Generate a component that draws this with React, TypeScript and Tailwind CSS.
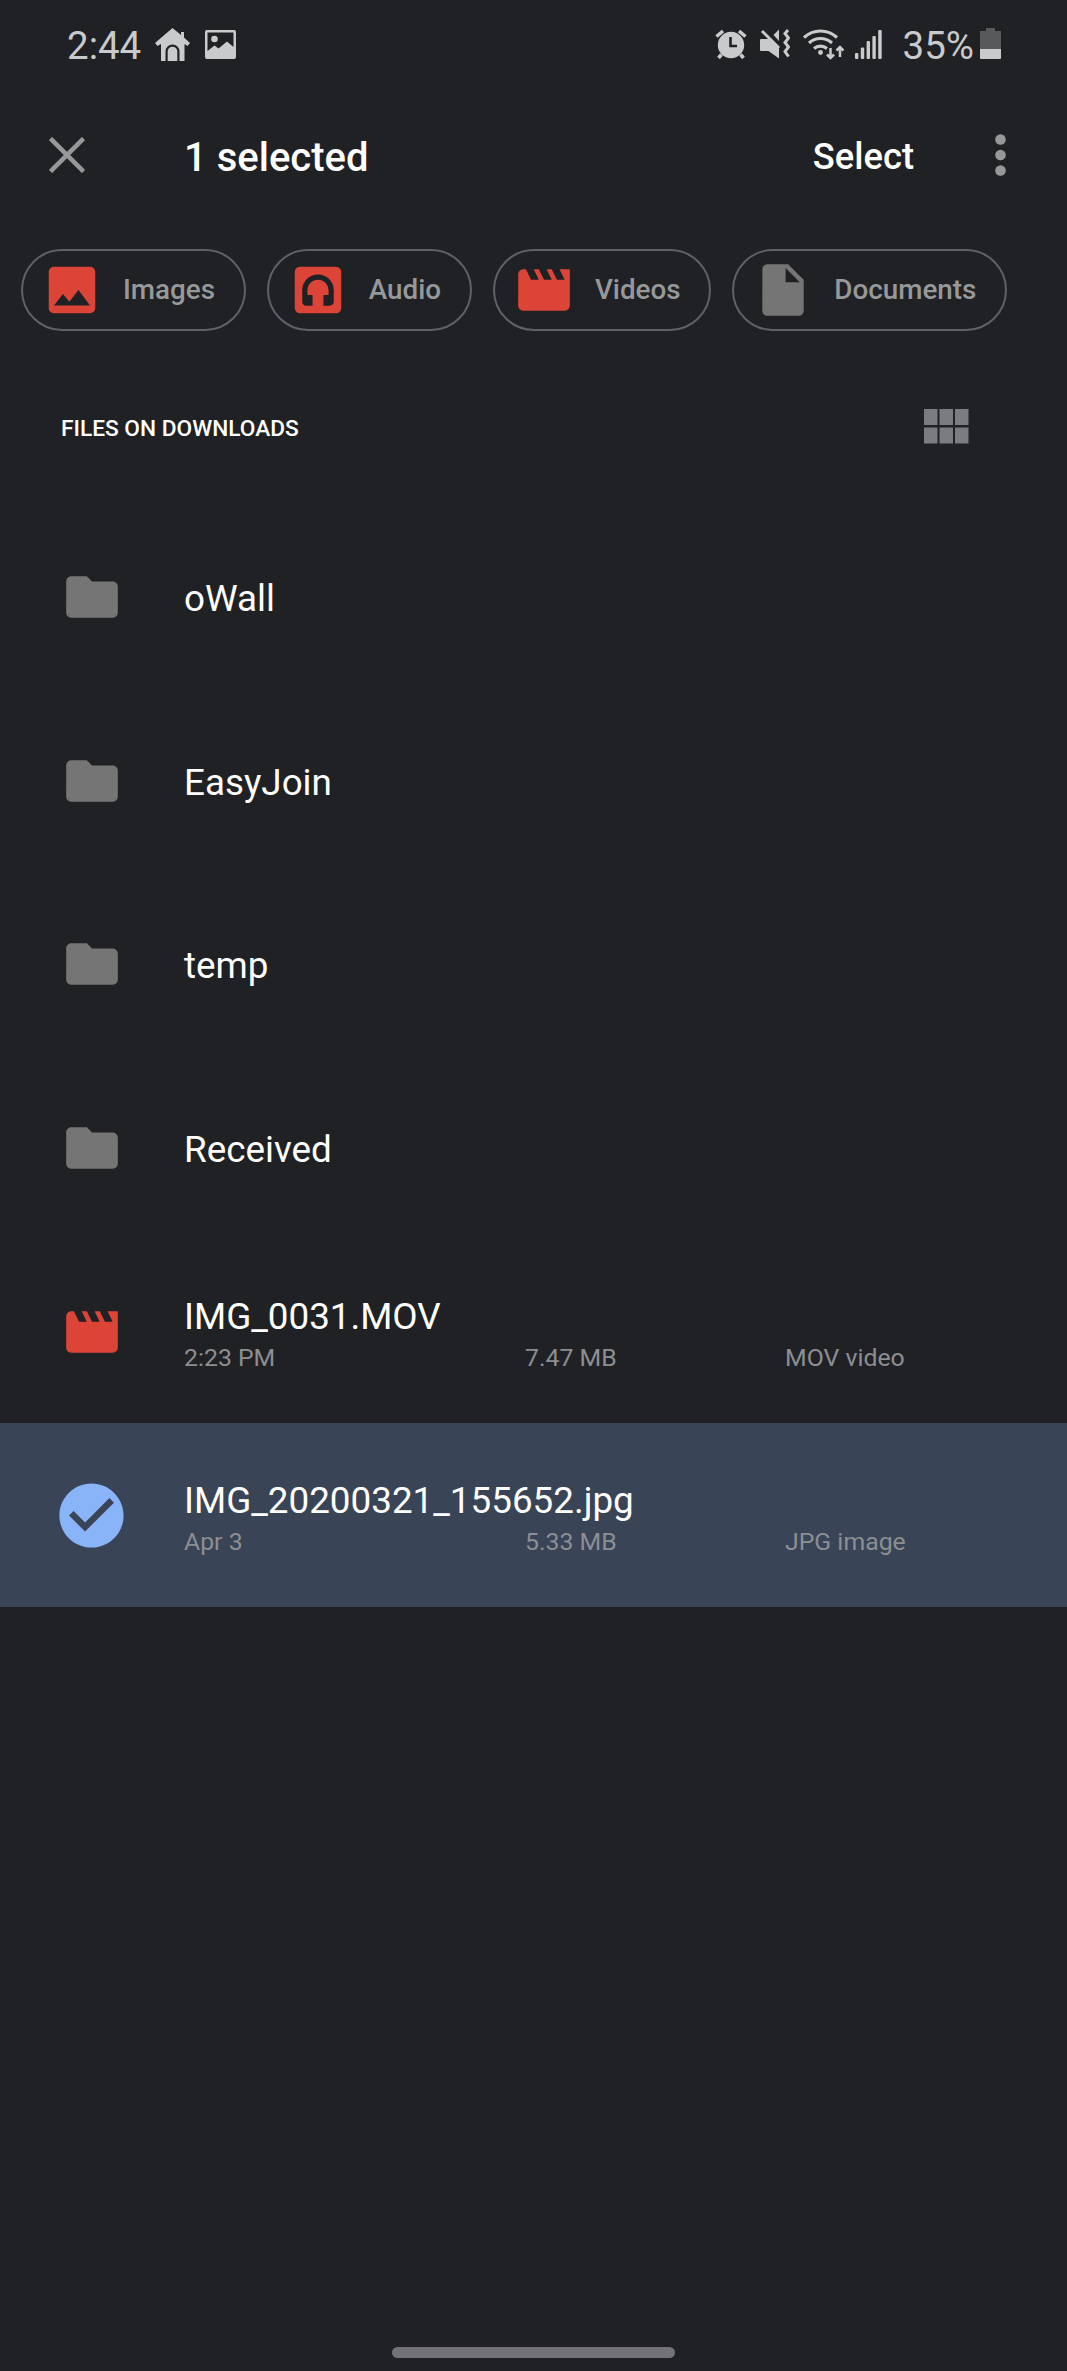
import type { ReactNode } from "react";
import {
  MdCheckCircle,
  MdFolder,
  MdInsertDriveFile,
  MdMovie,
  MdPhoto,
} from "react-icons/md";

interface FileEntry {
  name: string;
  kind: "folder" | "video" | "image";
  date?: string;
  size?: string;
  type?: string;
  selected?: boolean;
}

const files: FileEntry[] = [
  { name: "oWall", kind: "folder" },
  { name: "EasyJoin", kind: "folder" },
  { name: "temp", kind: "folder" },
  { name: "Received", kind: "folder" },
  {
    name: "IMG_0031.MOV",
    kind: "video",
    date: "2:23 PM",
    size: "7.47 MB",
    type: "MOV video",
  },
  {
    name: "IMG_20200321_155652.jpg",
    kind: "image",
    date: "Apr 3",
    size: "5.33 MB",
    type: "JPG image",
    selected: true,
  },
];

// Rounded square with a headphones cutout
function AudioIcon() {
  return (
    <svg viewBox="0 0 24 24" className="size-[62px] text-[#db4437]">
      <rect x="3" y="3" width="18" height="18" rx="2" fill="currentColor" />
      <path
        d="M12 6a6.1 6.1 0 0 0-6.1 6.1v4.4c0 .9.7 1.6 1.6 1.6h2.4V13.9H7.9v-1.8a4.1 4.1 0 0 1 8.2 0v1.8h-2v4.2h2.4c.9 0 1.6-.7 1.6-1.6v-4.4A6.1 6.1 0 0 0 12 6z"
        fill="#202124"
      />
    </svg>
  );
}

function GridIcon() {
  return (
    <svg viewBox="0 0 45 35" className="mb-[2px] h-[35px] w-[45px]" fill="#7b7c7f">
      <path d="M0 0h13.5v16H0zM15.5 0H29v16H15.5zM31 0h13.5v16H31zM0 18.500h13.5v16H0zM15.5 18.500H29v16H15.5zM31 18.500h13.5v16H31z" />
    </svg>
  );
}

function StatusBar() {
  return (
    <div className="flex h-[90px] items-center pr-[66px] pl-[67px] text-[#c8cacb]">
      <span className="pt-[2px] text-[38.5px] leading-none">2:44</span>
      <svg viewBox="0 0 35 33" className="mb-[2px] ml-[14px] h-[33px] w-[35px]" fill="currentColor">
        <path d="M17.5 0 26 7V4h3v5.5l6 5.5-2.5 3-3-2V33h-5V23.5a7 7 0 0 0-14 0V33H6V16l-3.5 2L0 15z" />
        <path d="M12.7 33V23.5a4.8 4.8 0 0 1 9.6 0V33z" />
      </svg>
      <svg viewBox="0 0 31 29" className="mb-px ml-[15px] h-[29px] w-[31px]">
        <path
          fillRule="evenodd"
          fill="currentColor"
          d="M2 0h27a2 2 0 0 1 2 2v25a2 2 0 0 1-2 2H2a2 2 0 0 1-2-2V2a2 2 0 0 1 2-2zM2.5 2.5V21L9.5 15.5l4 3 8.5-7 6.5 5.5V2.5z"
        />
        <circle cx="9.5" cy="9" r="3.3" fill="currentColor" />
      </svg>

      <div className="ml-auto flex items-center">
        {/* alarm */}
        <svg viewBox="0 0 32 30" className="mb-[3px] h-[30px] w-[32px]" fill="none" stroke="currentColor">
          <circle cx="16" cy="16" r="13.2" fill="currentColor" stroke="none" />
          <path d="M1.5 7.5 8 2M24 2l6.5 5.5M6.5 25.5l-3 3.5M25.5 25.5l3 3.5" strokeWidth="3.6" />
          <path d="M15.5 8v9H22" stroke="#202124" strokeWidth="2.6" />
        </svg>
        {/* muted with vibration */}
        <svg viewBox="0 0 30 30" className="mb-[3px] ml-[13px] h-[30px] w-[30px]" fill="currentColor">
          <path d="M1 10h9l9 8v11.5L8.5 22H1a1 1 0 0 1-1-1V11a1 1 0 0 1 1-1z" />
          <path d="M13.5 6 19 .5V12z" />
          <path
            d="M2 2l17 17M28 1l-3 3.5 3.5 4.5-3.5 4.5 3.5 4.5-3.5 4.5 3.5 5"
            fill="none"
            stroke="currentColor"
            strokeWidth="3"
          />
        </svg>
        {/* wifi with traffic arrows */}
        <svg
          viewBox="0 0 41 31"
          className="mb-[2px] ml-[13px] h-[31px] w-[41px]"
          fill="none"
          stroke="currentColor"
          strokeWidth="3.1"
        >
          <path d="M1 8.5a24 24 0 0 1 33 0M6 14a17 17 0 0 1 23 0M11 19.5a10 10 0 0 1 13 0" />
          <circle cx="17.5" cy="23.5" r="2.4" fill="currentColor" stroke="none" />
          <path
            d="M27.5 19v10M24 25.5l3.5 3.5 3.5-3.5M37 28V18M33.5 21.5 37 18l3.5 3.5"
            strokeWidth="2.5"
          />
        </svg>
        {/* signal */}
        <svg viewBox="0 0 27 29" className="mb-px ml-[11px] h-[29px] w-[27px]" fill="currentColor">
          <rect x="0" y="23" width="3.4" height="6" rx="1" />
          <rect x="5.8" y="17.5" width="3.4" height="11.5" rx="1" />
          <rect x="11.6" y="11" width="3.4" height="18" rx="1" />
          <rect x="17.4" y="6" width="3.4" height="23" rx="1" />
          <rect x="23.2" y="0" width="3.5" height="29" rx="1" />
        </svg>
        <span className="ml-[21px] pt-[2px] text-[38.5px] leading-none">35%</span>
        <svg viewBox="0 0 21 31" className="mb-[3px] ml-[6px] h-[31px] w-[21px]">
          <path d="M6 0h9v3h6v18H0V3h6z" fill="#58595b" />
          <path d="M0 21h21v9a1 1 0 0 1-1 1H1a1 1 0 0 1-1-1z" fill="currentColor" />
        </svg>
      </div>
    </div>
  );
}

function SelectionBar() {
  return (
    <header className="flex h-[130px] items-center pr-[61px] pl-[49px] font-medium text-white">
      <svg viewBox="0 0 36 36" className="size-[36px]" stroke="#97989a" strokeWidth="4.5">
        <path d="M1.5 1.5l33 33M34.5 1.5l-33 33" />
      </svg>
      <h1 className="ml-[99px] pt-[5px] text-[40px]">1 selected</h1>
      <button className="ml-auto pt-[5px] text-[36.3px] font-medium">Select</button>
      <svg viewBox="0 0 11 42" className="ml-[81px] h-[42px] w-[11px]" fill="#97989a">
        <circle cx="5.5" cy="5.5" r="5.3" />
        <circle cx="5.5" cy="21" r="5.3" />
        <circle cx="5.5" cy="36.5" r="5.3" />
      </svg>
    </header>
  );
}

function Chip({ icon, label }: { icon: ReactNode; label: string }) {
  return (
    <button className="flex h-[82px] shrink-0 items-center gap-[20px] rounded-full border-2 border-[#5f6165] pr-[28.5px] pl-[18px] text-[27.8px] font-medium text-[#97989a]">
      {icon}
      {label}
    </button>
  );
}

function FileIcon({ file }: { file: FileEntry }) {
  if (file.selected) {
    return <MdCheckCircle className="size-[77px] text-[#8ab4f8]" />;
  }
  if (file.kind === "folder") {
    return <MdFolder className="size-[62px] text-[#757575]" />;
  }
  return <MdMovie className="size-[62px] text-[#db4437]" />;
}

function FileRow({ file }: { file: FileEntry }) {
  return (
    <li
      className={`flex h-[183.7px] items-center ${file.selected ? "bg-[#3a4457]" : ""}`}
    >
      <div className="flex w-[183px] shrink-0 justify-center">
        <FileIcon file={file} />
      </div>
      <div className={`flex-1 pl-px ${file.date ? "pt-[9px]" : "pt-[4px]"}`}>
        <div className="text-[36.8px] leading-[44px] text-white">{file.name}</div>
        {file.date && (
          <div className="flex text-[24.8px] leading-[38px] text-[#8c8e92]">
            <span className="w-[341px]">{file.date}</span>
            <span className="w-[260px]">{file.size}</span>
            <span>{file.type}</span>
          </div>
        )}
      </div>
    </li>
  );
}

export default function App() {
  return (
    <div className="flex h-[2371px] w-[1067px] flex-col overflow-hidden bg-[#202124] font-['Roboto',sans-serif]">
      <StatusBar />
      <SelectionBar />

      <div className="mt-[29px] flex gap-[21.3px] pl-[21px]">
        <Chip icon={<MdPhoto className="size-[62px] text-[#db4437]" />} label="Images" />
        <Chip icon={<AudioIcon />} label="Audio" />
        <Chip icon={<MdMovie className="size-[62px] text-[#db4437]" />} label="Videos" />
        <Chip
          icon={<MdInsertDriveFile className="size-[62px] text-[#757575]" />}
          label="Documents"
        />
      </div>

      <div className="mt-[64px] flex h-[64px] items-center justify-between pr-[98.5px] pl-[61px]">
        <h2 className="pt-[4px] text-[22.7px] font-medium text-white">FILES ON DOWNLOADS</h2>
        <GridIcon />
      </div>

      <ul className="mt-[46px]">
        {files.map((file) => (
          <FileRow key={file.name} file={file} />
        ))}
      </ul>

      {/* gesture bar */}
      <div className="mx-auto mt-auto mb-[13px] h-[11px] w-[283px] rounded-full bg-[#737277]" />
    </div>
  );
}
